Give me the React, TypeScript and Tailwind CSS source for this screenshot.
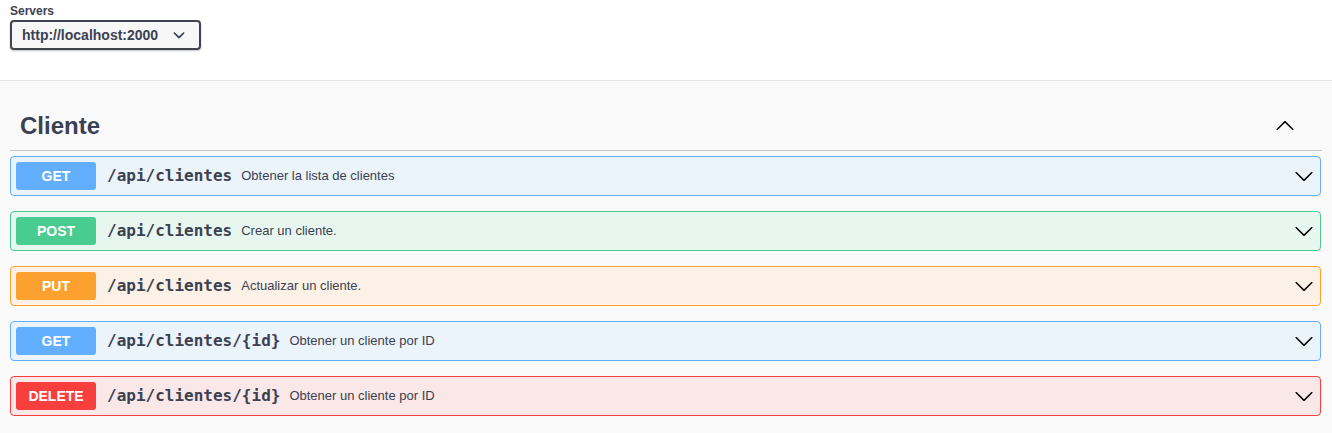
import React from 'react';

type Op = {
  method: string;
  path: string;
  summary: string;
  badge: string;
  block: string;
};

const ops: Op[] = [
  { method: 'GET', path: '/api/clientes', summary: 'Obtener la lista de clientes', badge: 'bg-[#61affe]', block: 'bg-[#ebf3fb] border-[#61affe]' },
  { method: 'POST', path: '/api/clientes', summary: 'Crear un cliente.', badge: 'bg-[#49cc90]', block: 'bg-[#e8f6f0] border-[#49cc90]' },
  { method: 'PUT', path: '/api/clientes', summary: 'Actualizar un cliente.', badge: 'bg-[#fca130]', block: 'bg-[#fbf1e6] border-[#fca130]' },
  { method: 'GET', path: '/api/clientes/{id}', summary: 'Obtener un cliente por ID', badge: 'bg-[#61affe]', block: 'bg-[#ebf3fb] border-[#61affe]' },
  { method: 'DELETE', path: '/api/clientes/{id}', summary: 'Obtener un cliente por ID', badge: 'bg-[#f93e3e]', block: 'bg-[#fae7e7] border-[#f93e3e]' },
];

const Arrow = ({ up = false }: { up?: boolean }) => (
  <svg width="20" height="20" viewBox="0 0 20 20" className={up ? 'rotate-180' : ''} fill="#000">
    <path d="M17.418 6.109c.272-.268.709-.268.979 0s.271.701 0 .969l-7.908 7.83c-.27.268-.707.268-.979 0l-7.908-7.83c-.27-.268-.27-.701 0-.969.271-.268.709-.268.979 0L10 13.25l7.418-7.141z" />
  </svg>
);

const OpBlock = ({ op }: { op: Op }) => (
  <div className={`flex items-center h-[40px] border rounded-[4px] mb-[15px] pl-[5px] pr-[6px] ${op.block}`}>
    <span className={`w-[80px] h-[28px] flex items-center justify-center rounded-[3px] text-white text-[14px] font-bold ${op.badge}`}>
      {op.method}
    </span>
    <span className="ml-[11px] text-[16px] font-bold text-[#3b4151] font-['DejaVu_Sans_Mono',monospace]">{op.path}</span>
    <span className="ml-[9px] text-[13px] text-[#3b4151]">{op.summary}</span>
    <span className="ml-auto flex items-center">
      <Arrow />
    </span>
  </div>
);

export default function App() {
  return (
    <div className="min-h-[433px] bg-[#fafafa] font-['Liberation_Sans',Arial,sans-serif] text-[#3b4151]">
      <div className="bg-white h-[81px] border-b border-[#e4e4e4] px-[10px] pt-[4px]">
        <div className="text-[12px] font-bold leading-[14px]">Servers</div>
        <div className="mt-[2px] w-[191px] h-[30px] border-2 border-[#41444e] rounded-[4px] bg-[#f7f7f7] shadow-[0_1px_2px_0_rgba(0,0,0,0.25)] flex items-center pl-[10px] pr-[14px]">
          <span className="text-[14px] font-bold">http://localhost:2000</span>
          <svg className="ml-auto" width="12" height="12" viewBox="0 0 20 20" fill="#3b4151">
            <path d="M13.418 7.859c.271-.268.709-.268.978 0 .27.268.272.701 0 .969l-3.908 3.83c-.27.268-.707.268-.979 0l-3.908-3.83c-.27-.267-.27-.701 0-.969.271-.268.709-.268.978 0L10 11l3.418-3.141z" transform="translate(-10 -10) scale(2)" />
          </svg>
        </div>
      </div>
      <div className="px-[10px] pt-[20px]">
        <div className="flex items-center h-[50px] border-b border-[#c4c6cb] pl-[10px] pr-[27px]">
          <h3 className="text-[24px] font-bold">Cliente</h3>
          <span className="ml-auto">
            <Arrow up />
          </span>
        </div>
        <div className="mt-[5px] pr-[1px]">
          {ops.map((op, i) => (
            <OpBlock key={i} op={op} />
          ))}
        </div>
      </div>
    </div>
  );
}
